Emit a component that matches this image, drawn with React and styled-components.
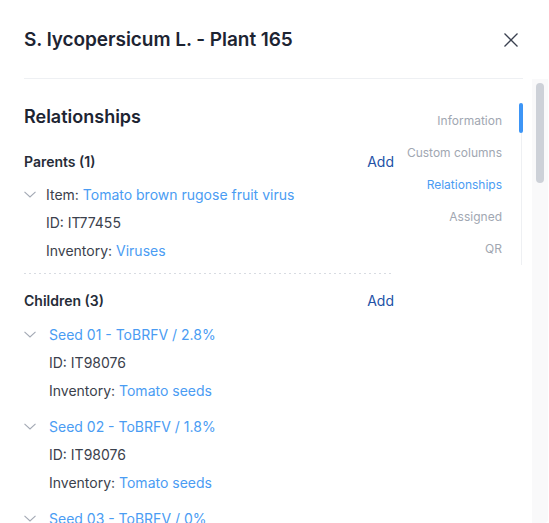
import React from 'react'
import styled, { createGlobalStyle } from 'styled-components'

const Global = createGlobalStyle`
  html, body {
    margin: 0;
    padding: 0;
    background: #ffffff;
    font-family: Inter, "Noto Sans", sans-serif;
    -webkit-font-smoothing: antialiased;
  }
`;

const Panel = styled.div`
  width: 548px;
  height: 523px;
  display: flex;
  flex-direction: column;
  background: #ffffff;
`;

const Header = styled.header`
  height: 79px;
  margin: 0 25px 0 24px;
  display: flex;
  align-items: center;
  justify-content: space-between;
  border-bottom: 1px solid #eef0f3;
  box-sizing: border-box;
  flex-shrink: 0;
`;

const Title = styled.h1`
  margin: 0;
  font-size: 19px;
  font-weight: 600;
  color: #1d2432;
  letter-spacing: -0.05px;
`;

const CloseButton = styled.button`
  width: 24px;
  height: 24px;
  padding: 0;
  border: 0;
  background: none;
  display: flex;
  align-items: center;
  justify-content: center;
  color: #3a4150;
  cursor: pointer;
  margin-top: 2px;
`;

const Body = styled.div`
  flex: 1;
  min-height: 0;
  display: flex;
`;

const Content = styled.div`
  flex: 1;
  overflow: hidden;
  padding: 26px 8px 0 24px;
  box-sizing: border-box;
  display: flex;
  align-items: flex-start;
`;

const ScrollTrack = styled.div`
  width: 16px;
  flex-shrink: 0;
  background: #f9f9fa;
  padding: 4px;
  box-sizing: border-box;
  border-bottom-right-radius: 4px;
`;

const ScrollThumb = styled.div`
  width: 8px;
  height: 100px;
  border-radius: 4px;
  background: #cdd1d8;
`;

const Main = styled.main`
  width: 370px;
  flex-shrink: 0;
`;

const SectionTitle = styled.h2`
  margin: 0 0 22px;
  font-size: 18px;
  line-height: 24px;
  font-weight: 600;
  color: #1d2432;
`;

const Group = styled.section`
  padding-bottom: 10px;
  background-image: ${p =>
    p.$dotted ? 'linear-gradient(to right, #d8dce2 2px, transparent 2px)' : 'none'};
  background-size: 5px 1px;
  background-repeat: repeat-x;
  background-position: left bottom;
  margin-bottom: 16px;
`;

const GroupHead = styled.div`
  display: flex;
  justify-content: space-between;
  align-items: center;
  height: 20px;
  margin-bottom: ${p => p.$space || 9}px;
`;

const GroupTitle = styled.h3`
  margin: 0;
  font-size: 14px;
  font-weight: 600;
  color: #262c38;
`;

const AddLink = styled.a`
  font-size: 14px;
  color: #2352a6;
  text-decoration: none;
  cursor: pointer;
`;

const Entry = styled.div`
  margin-bottom: 8px;
`;

const Row = styled.div`
  display: flex;
  align-items: center;
  height: 28px;
  font-size: 14px;
  color: #3b414c;
  padding-left: ${p => (p.$indent ? `${p.$indent}px` : '0')};
  gap: ${p => p.$gap || 0}px;
  white-space: nowrap;
`;

const Link = styled.a`
  color: #4a9cf3;
  text-decoration: none;
  cursor: pointer;
  white-space: pre;
`;

const Chevron = styled.svg`
  width: 12px;
  height: 7px;
  flex-shrink: 0;
`;

const Nav = styled.nav`
  position: relative;
  flex: 1;
  margin-top: -1px;
  display: flex;
  flex-direction: column;
  align-items: flex-end;
  padding-right: 22px;
  box-sizing: border-box;

  &::before {
    content: '';
    position: absolute;
    right: 2px;
    top: -1px;
    bottom: -1px;
    width: 1px;
    background: #eef0f3;
  }
`;

const Indicator = styled.span`
  position: absolute;
  right: 1px;
  top: -1px;
  width: 4px;
  height: 30px;
  border-radius: 2px;
  background: #3d95f6;
`;

const NavItem = styled.a`
  height: 32px;
  display: flex;
  align-items: center;
  font-size: 12px;
  color: ${p => (p.$active ? '#4a9cf3' : '#a1a7b2')};
  cursor: pointer;
`;

const ChevronIcon = () => (
  <Chevron viewBox="0 0 12 7" fill="none">
    <polyline points="0.5,0.8 6,6 11.5,0.8" stroke="#a3a9b4" strokeWidth="1.1" />
  </Chevron>
);

const children = [
  { name: 'Seed 01 - ToBRFV / 2.8%', id: 'IT98076', inv: 'Tomato seeds' },
  { name: 'Seed 02 - ToBRFV / 1.8%', id: 'IT98076', inv: 'Tomato seeds' },
  { name: 'Seed 03 - ToBRFV / 0%', id: 'IT98076', inv: 'Tomato seeds' },
];

const navItems = ['Information', 'Custom columns', 'Relationships', 'Assigned', 'QR'];

export default function App() {
  return (
    <>
      <Global />
      <Panel>
        <Header>
          <Title>S. lycopersicum L. - Plant 165</Title>
          <CloseButton aria-label="Close">
            <svg width="16" height="16" viewBox="0 0 16 16" fill="none">
              <path d="M1.5 1.5 L14.5 14.5 M14.5 1.5 L1.5 14.5" stroke="currentColor" strokeWidth="1.3" />
            </svg>
          </CloseButton>
        </Header>
        <Body>
          <Content>
            <Main>
              <SectionTitle>Relationships</SectionTitle>
              <Group $dotted>
                <GroupHead>
                  <GroupTitle>Parents (1)</GroupTitle>
                  <AddLink>Add</AddLink>
                </GroupHead>
                <Row $gap={10}>
                  <ChevronIcon />
                  <span>
                    Item: <Link>Tomato brown rugose fruit virus</Link>
                  </span>
                </Row>
                <Row $indent={22}>ID: IT77455</Row>
                <Row $indent={22}>
                  Inventory:&nbsp;<Link>Viruses</Link>
                </Row>
              </Group>
              <Group>
                <GroupHead $space={10}>
                  <GroupTitle>Children (3)</GroupTitle>
                  <AddLink>Add</AddLink>
                </GroupHead>
                {children.map(c => (
                  <Entry key={c.name}>
                    <Row $gap={13}>
                      <ChevronIcon />
                      <Link>{c.name}</Link>
                    </Row>
                    <Row $indent={25}>ID: {c.id}</Row>
                    <Row $indent={25}>
                      Inventory:&nbsp;<Link>{c.inv}</Link>
                    </Row>
                  </Entry>
                ))}
              </Group>
            </Main>
            <Nav>
              <Indicator />
              {navItems.map(n => (
                <NavItem key={n} $active={n === 'Relationships'}>
                  {n}
                </NavItem>
              ))}
            </Nav>
          </Content>
          <ScrollTrack>
            <ScrollThumb />
          </ScrollTrack>
        </Body>
      </Panel>
    </>
  );
}
